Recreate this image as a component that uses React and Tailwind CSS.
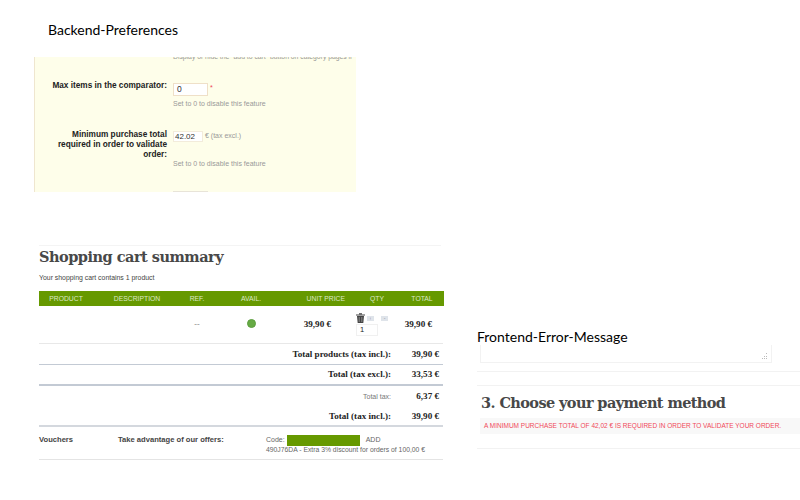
const columns = "grid grid-cols-[54px_88px_32px_76px_61px_54px_40px]"

function Caption({ children, className = "" }) {
  return <div className={`font-['Lato',sans-serif] text-[14px] leading-5 text-black ${className}`}>{children}</div>
}

function PrefRow({ label, className = "", children }) {
  return (
    <div className={`flex ${className}`}>
      <div className="w-[132px] text-right text-[8.25px] leading-[10px] font-bold text-[#222]">{label}</div>
      <div className="ml-[6px] flex-1">{children}</div>
    </div>
  )
}

function TotalRow({ label, value, border, small, height = "h-[21px] pt-[1px]" }) {
  return (
    <div className={`flex items-center justify-end ${height} ${border || ""}`}>
      <div className={small ? "text-[7px] text-[#777] font-['Liberation_Sans',sans-serif]" : "text-[9.1px] font-bold text-[#222]"}>{label}</div>
      <div className="w-[52px] pr-[4px] text-right text-[9.1px] font-bold text-[#222]">{value}</div>
    </div>
  )
}

function QtyButton({ sign }) {
  return (
    <span className="flex h-[5px] w-[7px] items-center justify-center bg-[#dfe4ea] text-[5px] leading-[5px] text-[#667]">{sign}</span>
  )
}

function Backend() {
  return (
    <div className="h-[135px] w-[322px] ml-[34px] mt-[17px] bg-[#fefeea] border-l border-[#efe6cf] overflow-hidden relative">
      <div className="ml-[138px] -mt-[4px] h-[8px] text-[6.8px] leading-[8px] text-[#999] whitespace-nowrap">Display or hide the "add to cart" button on category pages if</div>
      <PrefRow label="Max items in the comparator:" className="mt-[20px]">
        <div className="flex items-start mt-[2px]">
          <div className="h-[13px] w-[35px] bg-white border border-[#efe0c8] text-[8.5px] leading-[11px] pl-[3px] text-[#333]">0</div>
          <span className="ml-[2px] text-[7px] text-[#e45] leading-[10px]">*</span>
        </div>
        <div className="mt-[3px] text-[7px] leading-[10px] text-[#999]">Set to 0 to disable this feature</div>
      </PrefRow>
      <PrefRow label={<>Minimum purchase total<br />required in order to validate<br />order:</>} className="mt-[21px]">
        <div className="flex items-start mt-[1px]">
          <div className="h-[11px] w-[30px] bg-white border border-[#f3ecdb] text-[8px] leading-[10px] pl-[1px] text-[#333]">42.02</div>
          <span className="ml-[2px] text-[7px] text-[#999] leading-[10px]">€ (tax excl.)</span>
        </div>
        <div className="mt-[17px] text-[7px] leading-[10px] text-[#999]">Set to 0 to disable this feature</div>
      </PrefRow>
      <div className="absolute left-[138px] bottom-0 h-[1px] w-[35px] bg-[#e8e4d8]"></div>
    </div>
  )
}

function Cart() {
  return (
    <div className="ml-[39px] mt-[53px] w-[405px]">
      <div className="w-[402px] border-t border-[#f4f4f4] pt-[2px]">
        <h1 className="font-['DejaVu_Serif',serif] font-bold text-[14.5px] leading-[17px] tracking-[-0.5px] text-[#484848] whitespace-nowrap">Shopping cart summary</h1>
      </div>
      <div className="mt-[8px] text-[6.9px] leading-[10px] text-[#444]">Your shopping cart contains 1 product</div>
      <div className={`${columns} mt-[8px] h-[15px] bg-[#669900] items-center text-center text-[6.8px] leading-[15px] text-[#dde8c8]`}>
        <span>PRODUCT</span>
        <span>DESCRIPTION</span>
        <span>REF.</span>
        <span>AVAIL.</span>
        <span className="text-right pr-[5px]">UNIT PRICE</span>
        <span>QTY</span>
        <span className="pr-[4px]">TOTAL</span>
      </div>
      <div className={`${columns} h-[38px] w-[404px] items-center border-b border-[#e8e8e8] font-['Liberation_Serif',serif] text-[#222]`}>
        <span></span>
        <span></span>
        <span className="text-center text-[8px] text-[#888]">--</span>
        <span className="flex justify-center -mt-[3px]">
          <span className="block h-[9px] w-[9px] rounded-full bg-[#66aa44] border border-[#5c9e3e]"></span>
        </span>
        <span className="text-right pr-[19px] pt-[1px] text-[9.1px] font-bold">39,90 €</span>
        <div className="pl-[6px]">
          <div className="flex items-center h-[9px] gap-[2px]">
            <svg width="9" height="10" viewBox="0 0 9 10" className="shrink-0">
              <path d="M0 1.5h9v1H0zM3 .3h3v1H3zM1 3h7l-.7 7H1.7z" fill="#444" />
              <path d="M3.2 4v5M5.8 4v5" stroke="#bbb" strokeWidth="0.6" />
            </svg>
            <QtyButton sign="+" />
            <span className="w-[3px]"></span>
            <QtyButton sign="-" />
          </div>
          <div className="mt-[1px] h-[12px] w-[22px] border border-[#f0f0f0] pl-[3px] text-[7.5px] leading-[10px] font-['Liberation_Sans',sans-serif]">1</div>
        </div>
        <span className="text-right pr-[12px] pt-[1px] text-[9.1px] font-bold">39,90 €</span>
      </div>
      <div className="w-[404px] font-['Liberation_Serif',serif]">
        <TotalRow label="Total products (tax incl.):" value="39,90 €" border="border-b border-[#c3cad4]" />
        <TotalRow label="Total (tax excl.):" value="33,53 €" border="border-b-2 border-[#c3cad4]" />
        <TotalRow label="Total tax:" value="6,37 €" small />
        <TotalRow label="Total (tax incl.):" value="39,90 €" border="border-b-2 border-[#d4d8de]" height="h-[20px] pt-[1px]" />
      </div>
      <div className="flex h-[33px] w-[404px] border-b border-[#e4e4e4] pt-[8px] text-[7.6px] leading-[10px]">
        <div className="w-[79px] font-bold text-[#444]">Vouchers</div>
        <div className="w-[148px] font-bold text-[#444]">Take advantage of our offers:</div>
        <div className="text-[#666] text-[7px]">
          <div className="flex items-center h-[10px]">
            <span>Code:</span>
            <span className="ml-[2px] block h-[11px] w-[73px] bg-[#669900]"></span>
            <span className="ml-[6px]">ADD</span>
          </div>
          <div className="text-[6.8px] leading-[9px] whitespace-nowrap">490J76DA - Extra 3% discount for orders of 100,00 €</div>
        </div>
      </div>
    </div>
  )
}

function Frontend() {
  return (
    <div className="flex-1 mt-[327px]">
      <Caption className="ml-[32px]">Frontend-Error-Message</Caption>
      <div className="ml-[35px] -mt-[2px] h-[18px] w-[292px] border border-t-0 border-[#f2f2f2] relative">
        <svg width="7" height="7" viewBox="0 0 7 7" className="absolute right-[3px] bottom-[2px]">
          <path d="M5 0h1v1H5zM3 3h1v1H3zM5 3h1v1H5zM1 5h1v1H1zM3 5h1v1H3zM5 5h1v1H5z" fill="#bbb" />
        </svg>
      </div>
      <div className="ml-[32px] mt-[8px] h-[14px] border-t border-[#f2f2f2]"></div>
      <div className="ml-[32px] border-t border-[#f2f2f2] pl-[4px] pt-[7px]">
        <h2 className="font-['DejaVu_Serif',serif] font-bold text-[14.5px] leading-[19px] tracking-[-0.6px] text-[#484848] whitespace-nowrap">3. Choose your payment method</h2>
      </div>
      <div className="ml-[35px] mt-[6px] h-[16px] bg-[#f8f8f8] pl-[4px] text-[6.5px] leading-[16px] text-[#f04858] whitespace-nowrap">
        A MINIMUM PURCHASE TOTAL OF 42,02 € IS REQUIRED IN ORDER TO VALIDATE YOUR ORDER.
      </div>
      <div className="ml-[32px] mt-[14px] border-t border-[#f2f2f2]"></div>
    </div>
  )
}

export default function App() {
  return (
    <div className="flex h-[500px] w-[800px] overflow-hidden bg-white font-['Liberation_Sans',sans-serif]">
      <div className="w-[445px] shrink-0">
        <Caption className="ml-[48px] mt-[20px]">Backend-Preferences</Caption>
        <Backend />
        <Cart />
      </div>
      <Frontend />
    </div>
  )
}
